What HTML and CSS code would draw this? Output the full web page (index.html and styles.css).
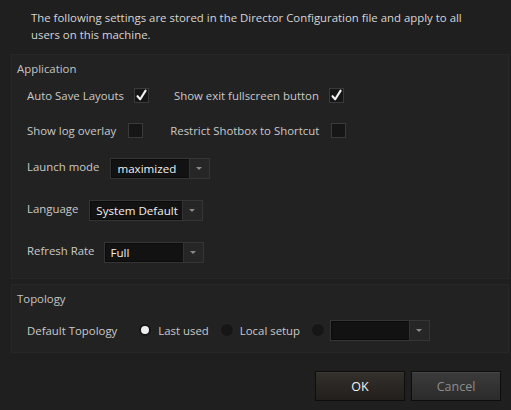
FILE: index.html
```html
<!DOCTYPE html>
<html>
<head>
<meta charset="utf-8">
<link rel="stylesheet" href="styles.css">
</head>
<body>
<div class="dialog">
  <p class="intro">The following settings are stored in the Director Configuration file and apply to all users on this machine.</p>

  <section class="group app">
    <div class="group-title">Application</div>
    <div class="row r1">
      <span class="label">Auto Save Layouts</span>
      <span class="check on"><svg viewBox="0 0 15 15" width="15" height="15"><path d="M3.5 8.2 L6.2 11.3 L11.6 2.6" fill="none" stroke="#f2f2f2" stroke-width="2.1" stroke-linecap="round" stroke-linejoin="round"/></svg></span>
      <span class="label second">Show exit fullscreen button</span>
      <span class="check on"><svg viewBox="0 0 15 15" width="15" height="15"><path d="M3.5 8.2 L6.2 11.3 L11.6 2.6" fill="none" stroke="#f2f2f2" stroke-width="2.1" stroke-linecap="round" stroke-linejoin="round"/></svg></span>
    </div>
    <div class="row r2">
      <span class="label">Show log overlay</span>
      <span class="check"></span>
      <span class="label second">Restrict Shotbox to Shortcut</span>
      <span class="check"></span>
    </div>
    <div class="row r3">
      <span class="label">Launch mode</span>
      <div class="combo w100"><span class="value">maximized</span><span class="arrow"></span></div>
    </div>
    <div class="row r4 lang">
      <span class="label">Language</span>
      <div class="combo w114"><span class="value">System Default</span><span class="arrow"></span></div>
    </div>
    <div class="row r4">
      <span class="label">Refresh Rate</span>
      <div class="combo w100"><span class="value">Full</span><span class="arrow"></span></div>
    </div>
  </section>

  <section class="group topo">
    <div class="group-title">Topology</div>
    <div class="row t1">
      <span class="label">Default Topology</span>
      <span class="radio on first"></span><span class="label rl">Last used</span>
      <span class="radio"></span><span class="label rl">Local setup</span>
      <span class="radio"></span>
      <div class="combo w100 tc"><span class="value"></span><span class="arrow"></span></div>
    </div>
  </section>

  <div class="buttons">
    <button class="btn ok">OK</button>
    <button class="btn cancel">Cancel</button>
  </div>
</div>
</body>
</html>
```
FILE: styles.css
```css
html, body {
  margin: 0;
  padding: 0;
  background: #1f1f1f;
  width: 511px;
  height: 410px;
  overflow: hidden;
}
.dialog {
  font-family: "Open Sans", "Noto Sans", sans-serif;
  font-size: 11.4px;
  color: #c9c9c9;
  display: flex;
  flex-direction: column;
}
.intro {
  margin: 9px 20px 0 31px;
  line-height: 17px;
  color: #d6d6d6;
  height: 45px;
}
.group {
  margin-left: 11px;
  width: 486px;
  border: 1px solid #272727;
  background: #222222;
  padding: 5px 5px 0 5px;
  box-sizing: content-box;
}
.app { height: 218px; }
.topo { margin-top: 5px; height: 62px; }
.group-title {
  line-height: 17px;
  color: #c4c4c4;
}
.row {
  display: flex;
  align-items: center;
  height: 22px;
  padding-left: 10px;
}
.r1 { margin-top: 7px; }
.r2 { margin-top: 13px; }
.r3 { margin-top: 16px; }
.r4 { margin-top: 20px; }
.t1 { margin-top: 12px; }
.label { white-space: nowrap; }
.r3 .label, .r4 .label { margin-top: -3px; }
.check {
  width: 13px;
  height: 13px;
  border: 1px solid #3a3a3a;
  background: #161616;
  margin-left: 10px;
  position: relative;
  flex: none;
}
.r2 .check { margin-left: 12px; }
.check svg { position: absolute; left: -1px; top: -1px; }
.second { margin-left: 25px; }
.r2 .second { margin-left: 27px; }
.combo {
  display: flex;
  height: 19px;
  border: 1px solid #353535;
  background: #121212;
  margin-left: 9px;
  box-shadow: inset 0 0 0 1px #0b0b0b;
  flex: none;
}
.r3 .combo, .lang .combo { margin-left: 11px; }
.w100 { width: 98px; }
.w114 { width: 112px; }
.combo .value {
  flex: 1;
  padding-left: 6px;
  line-height: 20px;
  color: #f0f0f0;
  font-size: 11.6px;
  white-space: nowrap;
  overflow: hidden;
}
.combo .arrow {
  width: 19px;
  background: #262626;
  border-left: 1px solid #333;
  position: relative;
  flex: none;
}
.combo .arrow::after {
  content: "";
  position: absolute;
  left: 6px;
  top: 8px;
  border-left: 3.5px solid transparent;
  border-right: 3.5px solid transparent;
  border-top: 3px solid #8a8a8a;
}
.radio {
  width: 12px;
  height: 12px;
  border-radius: 50%;
  background: #161616;
  border: 1px solid #262626;
  position: relative;
  flex: none;
}
.radio.on::after {
  content: "";
  position: absolute;
  left: 2px; top: 2px;
  width: 8px; height: 8px;
  border-radius: 50%;
  background: #eeeeee;
}
.radio.first { margin-left: 21px; }
.rl { margin-left: 6px; margin-right: 11px; }
.tc { margin-left: 5px; }
.buttons {
  display: flex;
  justify-content: flex-end;
  gap: 6px;
  margin-top: 18px;
  padding-right: 10px;
}
.btn {
  width: 90px;
  height: 30px;
  font-family: "Open Sans", "Noto Sans", sans-serif;
  font-size: 12.5px;
  border: 1px solid #0d0d0d;
  box-shadow: inset 0 1px 0 #3c3733;
  padding: 0;
}
.ok {
  background: linear-gradient(#34302c, #221f1c);
  color: #f2f2f2;
}
.cancel {
  background: linear-gradient(#3b3b3b, #2b2b2b);
  color: #8d8d8d;
  box-shadow: inset 0 1px 0 #474747;
}
```
